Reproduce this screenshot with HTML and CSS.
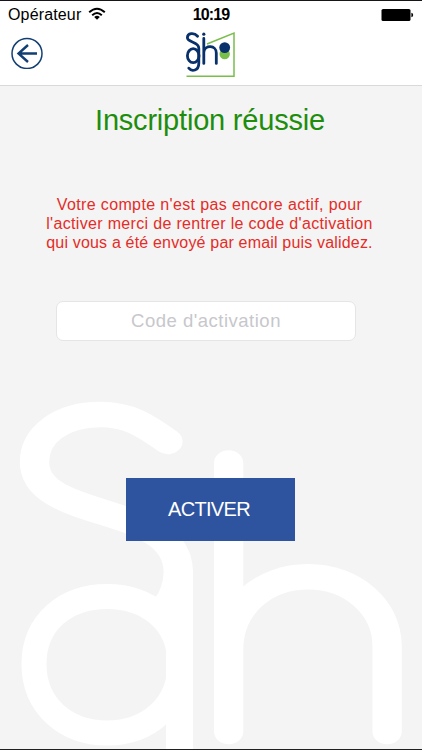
FILE: index.html
```html
<!DOCTYPE html>
<html lang="fr">
<head>
<meta charset="utf-8">
<meta name="viewport" content="width=device-width, initial-scale=1">
<title>Inscription réussie</title>
<link rel="stylesheet" href="styles.css">
</head>
<body>
<div class="screen">
  <header class="header">
    <div class="status">
      <div class="carrier"><span class="operator">Opérateur</span>
        <svg class="wifi" width="18" height="14" viewBox="0 0 18 14" fill="none" stroke="#000" stroke-width="2"><path d="M1.2 5.2Q9 -1.8 16.8 5.2M4.2 8.2Q9 3.8 13.8 8.2"/><path d="M6.2 10Q9 7.6 11.8 10L9 12.8Z" fill="#000" stroke="none"/></svg>
      </div>
      <time class="clock">10:19</time>
      <svg class="battery" width="33" height="14" viewBox="0 0 33 14"><rect x=".5" y=".9" width="29" height="12.2" rx="1.6"/><path d="M30.4 4.7Q32.2 5.2 32.2 7T30.4 9.3Z"/></svg>
    </div>
    <div class="nav">
      <button class="back" aria-label="Retour">
        <svg width="32" height="32" viewBox="0 0 32 32" fill="none" stroke="#123f73"><circle cx="16" cy="16.500" r="15" stroke-width="1.5"/><path d="M26 16.500H8M17 8L7.500 16.500L17 25" stroke-width="2.4"/></svg>
      </button>
      <svg class="logo" width="52" height="48" viewBox="0 0 52 48" fill="none" role="img" aria-label="Sigh">
        <path d="M1.5 45.2H49V2L22 13" stroke="#79bd4b" stroke-width="1.5"/>
        <circle cx="39.7" cy="23" r="5.2" fill="#79bd4b"/><circle cx="39.7" cy="16.6" r="5.4" fill="#08306a"/>
        <g stroke="#08306a" stroke-width="2.8" stroke-linecap="round">
          <path d="M12.6 5.2C9 1.200 2.400 1.9 2.400 6.8C2.400 11.6 13.8 10.5 13.8 17.2V32.2C13.8 40 6.8 40.9 3.8 37.2"/>
          <ellipse cx="8.2" cy="24.7" rx="5.8" ry="7"/>
          <path d="M18.8 7.500V32.4M18.8 21C20 13.500 31.3 14 31.3 22V32.4"/>
        </g>
        <circle cx="18.8" cy="3.200" r="1.6" fill="#08306a"/>
      </svg>
    </div>
  </header>
  <main class="content">
    <svg class="watermark" width="422" height="350" viewBox="0 400 422 350" fill="none" stroke="#fff" stroke-linecap="round" aria-hidden="true">
      <g transform="scale(1.15 1)" stroke-width="25.5">
        <path d="M146 441.5C126 425 112 414.5 87 414.5C53 414.5 30 435 30 462C30 522 155 502 155 572C155 586 150 598 146 604"/>
        <path d="M198.8 463V731.500M198.800 650C198.800 607 229 576.800 268 576.800C306 576.800 336.600 607 336.600 646V731.500"/>
      </g>
      <path d="M179.500 572V770" stroke-width="27"/>
      <path d="M107 596.500C66 596.500 34 622 34 664C34 706 66 733 107 733C148 733 180 706 180 664C180 622 148 596.500 107 596.500Z" stroke-width="25"/>
    </svg>
    <h1 class="title">Inscription réussie</h1>
    <p class="message"><span class="line one">Votre compte n'est pas encore actif, pour</span><span class="line two">l'activer merci de rentrer le code d'activation</span><span class="line three">qui vous a été envoyé par email puis validez.</span></p>
    <input class="code" type="text" placeholder="Code d'activation" aria-label="Code d'activation">
    <button class="activate">ACTIVER</button>
  </main>
</div>
</body>
</html>
```
FILE: styles.css
```css
* { box-sizing: border-box; }
body { margin: 0; font-family: "Liberation Sans", Arial, sans-serif; }
button { padding: 0; border: 0; font: inherit; }
.screen {
  width: 422px;
  height: 750px;
  overflow: hidden;
  display: flex;
  flex-direction: column;
  background: #f4f4f4;
  border-top: 1px solid #18151a;
  border-bottom: 1px solid #202020;
}
.header { height: 85px; background: #fff; border-bottom: 1px solid #d9d9d9; }
.status {
  height: 28px;
  display: grid;
  grid-template-columns: 1fr auto 1fr;
  align-items: center;
  padding: 0 8px;
}
.carrier { display: flex; align-items: center; gap: 7px; font-size: 16px; }
.operator { letter-spacing: .15px; }
.wifi { margin-bottom: 2px; }
.clock { font-size: 16px; font-weight: 700; letter-spacing: -.9px; }
.battery { justify-self: end; margin-right: 0; }
.nav {
  display: grid;
  grid-template-columns: 1fr 52px 1fr;
  padding: 2px 11px 0;
}
.back { width: 32px; height: 32px; margin-top: 6px; background: none; }
.back svg, .logo { display: block; }
.content {
  flex: 1;
  position: relative;
  display: flex;
  flex-direction: column;
  align-items: center;
}
.watermark { position: absolute; left: 0; bottom: -1px; }
.title {
  margin: 17px 2px 0 0;
  font-size: 29px;
  line-height: 34px;
  font-weight: 400;
  letter-spacing: -.2px;
  color: #1e8d0c;
  white-space: nowrap;
}
.message {
  margin: 58px 3px 0 0;
  font-size: 16px;
  line-height: 19px;
  color: #e52c27;
  text-align: center;
  white-space: nowrap;
}
.line { display: block; }
.one { letter-spacing: .37px; }
.two { letter-spacing: .33px; }
.three { letter-spacing: .18px; }
.code {
  width: 300px;
  height: 40px;
  margin: 49px 10px 0 0;
  padding: 0;
  border: 1px solid #e5e5e5;
  border-radius: 7px;
  background: #fff;
  font: 18.5px "Liberation Sans", Arial, sans-serif;
  letter-spacing: .5px;
  text-align: center;
}
.code::placeholder { color: #c7c7cc; opacity: 1; }
.activate {
  position: relative;
  width: 169px;
  height: 63px;
  margin: 137px 2px 0 0;
  padding-right: 2px;
  background: #2f549f;
  color: #fff;
  font-size: 20px;
  letter-spacing: -.7px;
}
```
